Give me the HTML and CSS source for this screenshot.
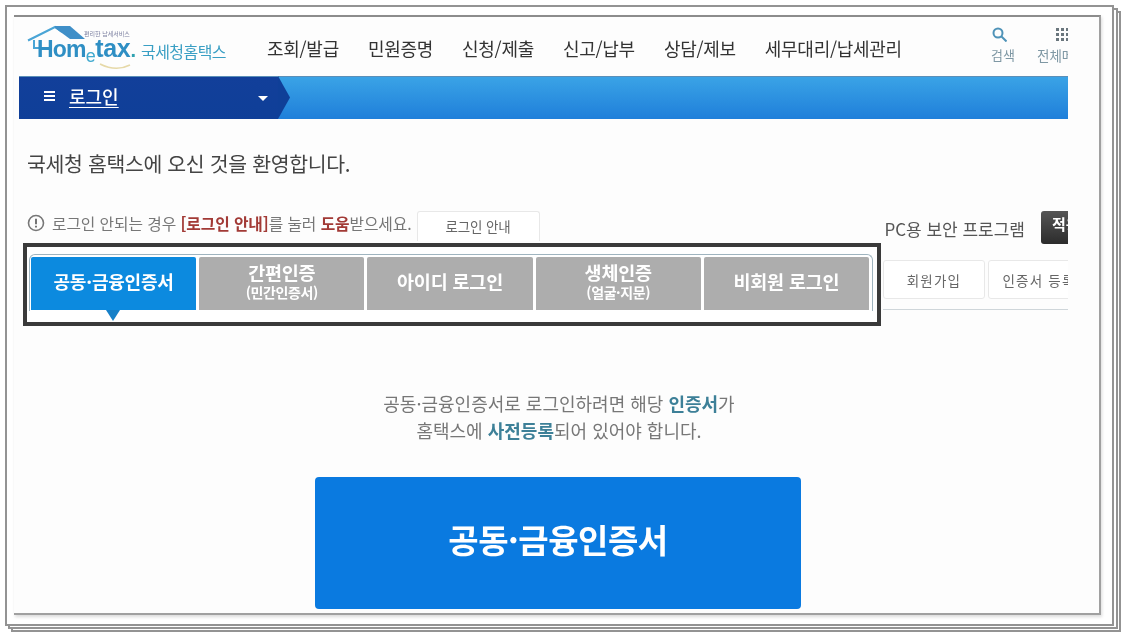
FILE: index.html
```html
<!DOCTYPE html>
<html lang="ko">
<head>
<meta charset="utf-8">
<title>Hometax</title>
<link rel="stylesheet" href="styles.css">
</head>
<body>
<div class="sheet back3"></div>
<div class="sheet back2"></div>
<div class="sheet back1"></div>
<main class="photo">
  <div class="clip">
    <header class="top">
      <a class="logo">
        <svg class="roof" width="116" height="50" viewBox="0 0 116 50"><path d="M2 16.5 L29 3 L36 8 M8 16 V24 H13" fill="none" stroke="#4aa5d6" stroke-width="2"/><path d="M29 2 L44 2 L59 15 L44 15 L29 4 Z" fill="#3f8fc8"/><path d="M74 40 Q90 48 104 41" fill="none" stroke="#e6d9a8" stroke-width="1.5"/></svg>
        <span class="word"><span class="hom">Hom</span><span class="e">e</span><span class="tax">tax</span><span class="dot">.</span></span>
        <span class="tiny">편리한 납세서비스</span>
        <span class="org">국세청홈택스</span>
      </a>
      <nav class="menu">
        <span>조회/발급</span><span>민원증명</span><span>신청/제출</span><span>신고/납부</span><span>상담/제보</span><span>세무대리/납세관리</span>
      </nav>
      <div class="tools">
        <div class="tool">
          <svg class="search-ico" width="15" height="15" viewBox="0 0 15 15"><circle cx="6" cy="6" r="4.5" fill="none" stroke="#4f93b8" stroke-width="2"/><path d="M9.5 9.5 L14.5 14.5" stroke="#4f93b8" stroke-width="2"/></svg>
          <span>검색</span>
        </div>
        <div class="tool all">
          <svg class="grid-ico" width="14" height="15" viewBox="0 0 14 15" fill="#6a767d"><rect x="0" y="1" width="3" height="3"/><rect x="5" y="1" width="3" height="3"/><rect x="10" y="1" width="3" height="3"/><rect x="0" y="6" width="3" height="3"/><rect x="5" y="6" width="3" height="3"/><rect x="10" y="6" width="3" height="3"/><rect x="0" y="11" width="3" height="3"/><rect x="5" y="11" width="3" height="3"/><rect x="10" y="11" width="3" height="3"/></svg>
          <span>전체메뉴</span>
        </div>
      </div>
    </header>

    <div class="bar">
      <div class="crumb">
        <span class="burger"><i></i><i></i><i></i></span>
        <a class="crumb-link">로그인</a>
        <span class="caret"></span>
      </div>
      <svg class="chev" width="12" height="43" viewBox="0 0 12 43"><path d="M0 0 L12 21.5 L0 43 Z" fill="#0f3f98"/></svg>
    </div>

    <h1 class="welcome">국세청 홈택스에 오신 것을 환영합니다.</h1>

    <div class="help-row">
      <div class="help">
        <svg width="18" height="18" viewBox="0 0 18 18"><circle cx="9" cy="9" r="7.5" fill="none" stroke="#777" stroke-width="1.6"/><path d="M9 4.8 V10.2 M9 11.8 V13.4" stroke="#666" stroke-width="1.8"/></svg>
        <span>로그인 안되는 경우 <b class="red">[로그인 안내]</b>를 눌러 <b class="red">도움</b>받으세요.</span>
        <a class="guide-btn">로그인 안내</a>
      </div>
      <div class="security">
        <span>PC용 보안 프로그램</span>
        <a class="dark-btn">적용</a>
      </div>
    </div>

    <div class="tab-row">
      <div class="tab-frame">
        <div class="tabs">
          <a class="tab on">공동·금융인증서</a>
          <a class="tab two">간편인증<small>(민간인증서)</small></a>
          <a class="tab">아이디 로그인</a>
          <a class="tab two">생체인증<small>(얼굴·지문)</small></a>
          <a class="tab">비회원 로그인</a>
        </div>
        <span class="pointer"></span>
      </div>
      <div class="side">
        <a class="side-btn">회원가입</a>
        <a class="side-btn">인증서 등록</a>
      </div>
    </div>

    <p class="intro">공동·금융인증서로 로그인하려면 해당 <b>인증서</b>가<br>홈택스에 <b>사전등록</b>되어 있어야 합니다.</p>

    <a class="cert">공동·금융인증서</a>
  </div>
</main>
</body>
</html>
```
FILE: styles.css
```css
* { box-sizing: border-box; }
html, body { margin: 0; padding: 0; }
body {
  width: 1125px;
  height: 637px;
  overflow: hidden;
  position: relative;
  background: #fff;
  font-family: "Noto Sans CJK KR", "Noto Sans", sans-serif;
  padding: 15px 0 0 14px;
}
.sheet { position: absolute; background: #fff; border: 2px solid #939393; }
.back3 { left: 11px; top: 11px; width: 1110px; height: 621px; }
.back2 { left: 8px; top: 8px; width: 1110px; height: 621px; }
.back1 { left: 5px; top: 5px; width: 1109px; height: 621px; }

.photo {
  position: relative;
  width: 1087px;
  height: 600px;
  background: #fdfdfd;
  border-top: 2px solid #8c8c8c;
  border-right: 2px solid #a0a0a0;
  border-bottom: 2px solid #a0a0a0;
  box-shadow: 1px 2px 3px rgba(0, 0, 0, .14);
  padding-left: 5px;
}
.clip { width: 1049px; height: 597px; overflow: hidden; filter: blur(.35px); }

.top { display: flex; height: 59px; align-items: flex-start; }
.logo { position: relative; display: block; width: 242px; height: 59px; flex: none; }
.roof { position: absolute; left: 7px; top: 7px; }
.word {
  position: absolute; left: 18px; top: 15px;
  display: flex; align-items: baseline;
  font-family: "Liberation Sans", sans-serif;
  line-height: 32px; font-weight: 700;
  color: #2f8fc4;
}
.hom { font-size: 23px; letter-spacing: -.8px; }
.e { color: #3fa9cf; position: relative; top: 5px; font-size: 18px; font-weight: 400; letter-spacing: -.5px; }
.tax { font-size: 25px; letter-spacing: -.3px; }
.dot { color: #2fa1b0; font-size: 20px; }
.tiny { position: absolute; left: 65px; top: 13px; font-size: 6px; line-height: 8px; color: #7b7fa0; white-space: nowrap; }
.org { position: absolute; left: 122px; top: 23px; font-size: 16px; line-height: 22px; color: #3a9fc4; letter-spacing: -.55px; white-space: nowrap; }

.menu { display: flex; gap: 29px; margin-left: 6px; flex: none; width: 690px; padding-top: 19px; }
.menu span { font-size: 18px; line-height: 24px; color: #333; white-space: nowrap; font-weight: 400; letter-spacing: -.28px; }

.tools { display: flex; gap: 20px; margin-left: 34px; flex: none; padding-top: 10px; }
.tool { display: flex; flex-direction: column; align-items: flex-start; width: 26px; gap: 4px; }
.tool svg { flex: none; }
.search-ico { margin-left: 1px; }
.tool span { font-size: 13px; line-height: 18px; color: #7f98a4; white-space: nowrap; }
.all { width: 52px; }
.grid-ico { margin-left: 19px; }
.all span { font-size: 13.5px; }

.bar {
  display: flex;
  height: 43px;
  background: linear-gradient(#3aa3e6, #1f7fda);
  border-top: 1px solid #5b8fb8;
}
.crumb {
  width: 259px; flex: none;
  display: flex; align-items: center;
  background: linear-gradient(#123f9a, #0f3f98);
  padding: 0 0 4px 25px; color: #fff;
}
.burger { display: flex; flex-direction: column; gap: 2px; width: 11px; }
.burger i { display: block; height: 2px; background: #fff; }
.crumb-link { margin-left: 14px; font-size: 18px; line-height: 24px; font-weight: 500; text-decoration: underline; text-underline-offset: 3px; color: #fff; }
.caret { margin-left: 139px; margin-top: 4px; width: 0; height: 0; border: 5px solid transparent; border-top-color: #fff; border-bottom: 0; }
.chev { flex: none; margin-top: -1px; }

.welcome { margin: 29px 0 0 8px; font-size: 20.5px; line-height: 30px; font-weight: 400; color: #444; letter-spacing: -.35px; }

.help-row { display: flex; justify-content: space-between; margin-top: 33px; height: 33px; }
.help { display: flex; align-items: flex-start; margin-left: 8px; font-size: 15.8px; line-height: 26px; color: #777; letter-spacing: -.1px; white-space: nowrap; }
.help svg { margin: 3px 7px 0 0; flex: none; }
.red { color: #a23a36; font-weight: 700; }
.guide-btn { width: 123px; height: 30px; margin-left: 5px; border: 1px solid #e8e8e8; border-bottom: 0; border-radius: 3px 3px 0 0; background: #fff; text-align: center; font-size: 13.5px; line-height: 28px; color: #666; }
.security { display: flex; align-items: flex-start; }
.security span { font-size: 17px; line-height: 36px; color: #555; white-space: nowrap; }
.dark-btn { width: 27px; height: 33px; margin-left: 16px; padding-left: 11px; overflow: hidden; background: linear-gradient(#555, #2c2c2c); border-radius: 3px 0 0 3px; color: #fff; font-size: 15px; font-weight: 700; line-height: 26px; white-space: nowrap; }

.tab-row { display: flex; height: 82px; margin-left: 4px; position: relative; z-index: 1; margin-top: -1px; }
.tab-frame { position: relative; width: 858px; height: 83px; flex: none; border: 4px solid #3a3a3a; background: #fff; padding: 7px 4px 0 2px; }
.tabs {
  display: flex; gap: 3px; height: 57px;
  padding: 2px 3px 0 1px;
  border: 1px solid #9fb4bf; border-bottom: 0; border-radius: 6px 6px 0 0;
}
.tab {
  flex: 1 1 0; height: 53px; padding-bottom: 5px;
  display: flex; flex-direction: column; align-items: center; justify-content: center;
  background: #adadad; color: #fff; border-radius: 2px 2px 0 0;
  font-size: 18.5px; line-height: 22px; font-weight: 700; white-space: nowrap; letter-spacing: -.2px;
}
.tab small { font-size: 14px; line-height: 18px; font-weight: 700; letter-spacing: -.4px; }
.tab.on { background: #0c8adf; font-size: 18px; }
.pointer {
  position: absolute; left: 79px; top: 63px; width: 0; height: 0;
  border: 7px solid transparent; border-top: 11px solid #1680c8; border-bottom: 0;
}
.side { display: flex; gap: 3px; margin-left: 2px; height: 67px; padding-top: 17px; border-bottom: 1px solid #cfd6da; flex: 1; }
.side-btn { flex: none; width: 102px; height: 39px; border: 1px solid #e8e8e8; border-radius: 3px; background: #fff; text-align: center; font-size: 13.5px; line-height: 38px; color: #666; letter-spacing: 1.2px; white-space: nowrap; }

.intro { margin: 65px 0 0; text-align: center; font-size: 18px; line-height: 27px; color: #777; width: 1080px; }
.intro b { font-weight: 700; color: #3d8098; }

.cert {
  display: block; width: 486px; height: 132px; margin: 33px 0 0 296px;
  background: #0a7ae0; border-radius: 4px;
  color: #fff; text-align: center; font-size: 33px; line-height: 124px; font-weight: 700; letter-spacing: -.5px;
}
```
